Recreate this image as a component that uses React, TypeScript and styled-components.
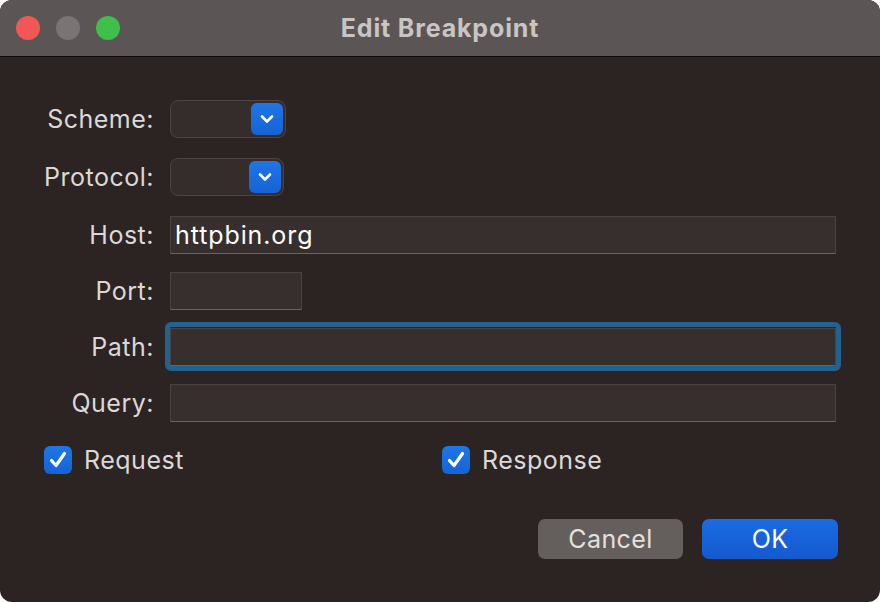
import React from 'react';
import styled, { createGlobalStyle } from 'styled-components';

const GlobalStyle = createGlobalStyle`
  html, body {
    margin: 0;
    padding: 0;
    background: #ffffff;
  }
  body {
    font-family: Inter, "Noto Sans", sans-serif;
  }
`;

const Window = styled.div`
  width: 880px;
  height: 602px;
  border-radius: 12px;
  overflow: hidden;
  background: #2b2422;
  display: flex;
  flex-flow: column;
`;

const TitleBar = styled.div`
  position: relative;
  height: 56px;
  flex: none;
  background: #5b5655;
  border-bottom: 1px solid #0e0b0a;
  display: flex;
  align-items: center;
  justify-content: center;
`;

const Lights = styled.div`
  position: absolute;
  left: 16px;
  top: 16px;
  display: flex;
  gap: 16px;
`;

const Light = styled.span<{ $color: string }>`
  width: 24px;
  height: 24px;
  border-radius: 50%;
  background: ${(p) => p.$color};
`;

const Title = styled.h1`
  margin: 0;
  font-size: 25px;
  font-weight: 700;
  color: #c9c5c4;
  letter-spacing: 0.85px;
`;

const Body = styled.div`
  flex: 1;
  padding: 43px 44px 0 44px;
  display: flex;
  flex-flow: column;
`;

const Form = styled.div`
  display: grid;
  grid-template-columns: 109px 1fr;
  column-gap: 17px;
  align-items: center;
`;

const Label = styled.label<{ $top: number }>`
  justify-self: end;
  margin-top: ${(p) => p.$top}px;
  font-size: 25px;
  color: #dcd8d7;
  line-height: 38px;
  letter-spacing: 0.5px;
  margin-right: -1px;
`;

const Cell = styled.div<{ $top: number }>`
  margin-top: ${(p) => p.$top}px;
  display: flex;
`;

const Popup = styled.div<{ $width: number }>`
  box-sizing: border-box;
  width: ${(p) => p.$width}px;
  height: 38px;
  border-radius: 8px;
  background: #342d2b;
  border: 1px solid #4b4442;
  display: flex;
  align-items: center;
  justify-content: flex-end;
  padding-right: 2px;
`;

const PopupArrow = styled.span`
  width: 32px;
  height: 32px;
  border-radius: 6px;
  background: linear-gradient(#1f76e6, #1563d4);
  display: flex;
  align-items: center;
  justify-content: center;
`;

const Field = styled.div<{ $width?: number; $focused?: boolean }>`
  position: relative;
  box-sizing: border-box;
  width: ${(p) => (p.$width ? `${p.$width}px` : '100%')};
  height: 38px;
  background: #362f2d;
  border: 1px solid #4a4341;
  border-bottom-color: #6a6462;
  display: flex;
  align-items: center;
  padding-left: 4px;
  font-size: 25px;
  color: #ffffff;
  letter-spacing: 0.9px;

  ${(p) =>
    p.$focused &&
    `
    &::after {
      content: '';
      position: absolute;
      inset: -7px -6px -6px -6px;
      border: 5px solid #23628f;
      border-radius: 6px;
      pointer-events: none;
    }
  `}
`;

const Checks = styled.div`
  display: grid;
  grid-template-columns: 398px 1fr;
  margin-top: 23px;
`;

const CheckItem = styled.label`
  display: flex;
  align-items: center;
  gap: 12px;
  font-size: 25px;
  color: #dcd8d7;
  letter-spacing: 0.5px;
`;

const Box = styled.span`
  width: 28px;
  height: 28px;
  border-radius: 6px;
  background: linear-gradient(#1f76e6, #1563d4);
  display: flex;
  align-items: center;
  justify-content: center;
`;

const Buttons = styled.div`
  display: flex;
  justify-content: flex-end;
  gap: 19px;
  margin-top: 44px;
  margin-right: -2px;
`;

const Button = styled.button<{ $primary?: boolean; $width: number }>`
  width: ${(p) => p.$width}px;
  height: 40px;
  border: none;
  border-radius: 7px;
  font-family: inherit;
  font-size: 25px;
  letter-spacing: 0.4px;
  color: ${(p) => (p.$primary ? '#ffffff' : '#e4e0df')};
  background: ${(p) =>
    p.$primary ? 'linear-gradient(#1a6ce2, #1559cf)' : '#645e5c'};
`;

const Chevron = () => (
  <svg width="14" height="10" viewBox="0 0 14 10">
    <path
      d="M2 2.5 L7 7.5 L12 2.5"
      fill="none"
      stroke="#ffffff"
      strokeWidth="2.6"
      strokeLinecap="round"
      strokeLinejoin="round"
    />
  </svg>
);

const Tick = () => (
  <svg width="22" height="22" viewBox="0 0 22 22">
    <path
      d="M4.5 11.5 L9 16.5 L17.5 4.5"
      fill="none"
      stroke="#ffffff"
      strokeWidth="3.2"
      strokeLinecap="round"
      strokeLinejoin="round"
    />
  </svg>
);

const App: React.FC = () => {
  return (
    <Window>
      <GlobalStyle />
      <TitleBar>
        <Lights>
          <Light $color="#f25757" />
          <Light $color="#7a7574" />
          <Light $color="#3fc04a" />
        </Lights>
        <Title>Edit Breakpoint</Title>
      </TitleBar>
      <Body>
        <Form>
          <Label $top={0}>Scheme:</Label>
          <Cell $top={0}>
            <Popup $width={116}>
              <PopupArrow>
                <Chevron />
              </PopupArrow>
            </Popup>
          </Cell>

          <Label $top={20}>Protocol:</Label>
          <Cell $top={20}>
            <Popup $width={114}>
              <PopupArrow>
                <Chevron />
              </PopupArrow>
            </Popup>
          </Cell>

          <Label $top={20}>Host:</Label>
          <Cell $top={20}>
            <Field>httpbin.org</Field>
          </Cell>

          <Label $top={18}>Port:</Label>
          <Cell $top={18}>
            <Field $width={132} />
          </Cell>

          <Label $top={18}>Path:</Label>
          <Cell $top={18}>
            <Field $focused />
          </Cell>

          <Label $top={18}>Query:</Label>
          <Cell $top={18}>
            <Field />
          </Cell>
        </Form>

        <Checks>
          <CheckItem>
            <Box>
              <Tick />
            </Box>
            Request
          </CheckItem>
          <CheckItem>
            <Box>
              <Tick />
            </Box>
            Response
          </CheckItem>
        </Checks>

        <Buttons>
          <Button $width={145}>Cancel</Button>
          <Button $primary $width={136}>
            OK
          </Button>
        </Buttons>
      </Body>
    </Window>
  );
};

export default App;
